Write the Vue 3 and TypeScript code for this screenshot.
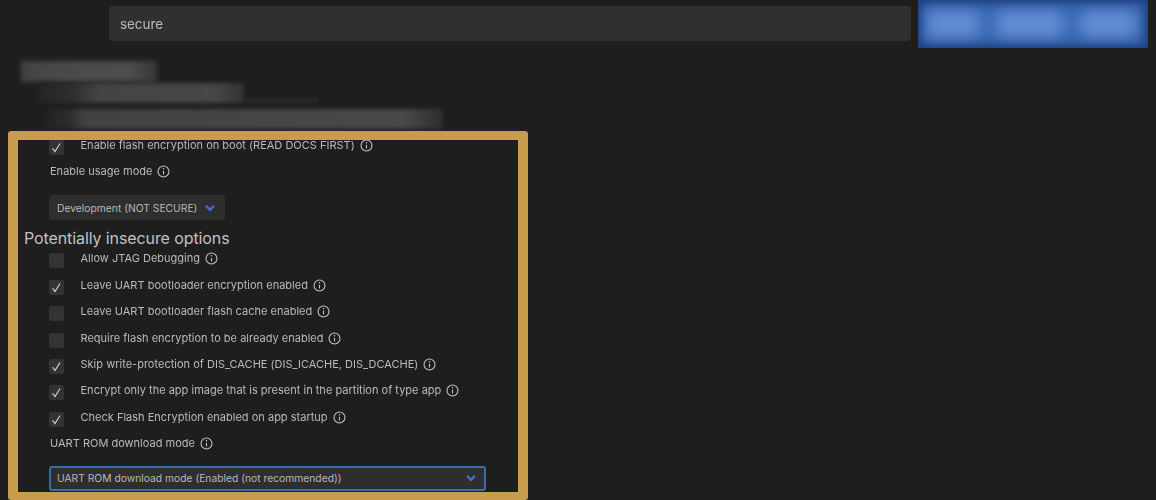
<script setup lang="ts">
interface Opt { label: string; checked: boolean }
const first: Opt = { label: 'Enable flash encryption on boot (READ DOCS FIRST)', checked: true }
const options: Opt[] = [
  { label: 'Allow JTAG Debugging', checked: false },
  { label: 'Leave UART bootloader encryption enabled', checked: true },
  { label: 'Leave UART bootloader flash cache enabled', checked: false },
  { label: 'Require flash encryption to be already enabled', checked: false },
  { label: 'Skip write-protection of DIS_CACHE (DIS_ICACHE, DIS_DCACHE)', checked: true },
  { label: 'Encrypt only the app image that is present in the partition of type app', checked: true },
  { label: 'Check Flash Encryption enabled on app startup', checked: true },
]
</script>

<template>
  <div class="page">
    <header class="topbar">
      <input class="search" value="secure" readonly />
      <div class="actions">
        <span class="glow g1"></span>
        <span class="glow g2"></span>
        <span class="glow g3"></span>
      </div>
    </header>

    <div class="redacted">
      <span class="smear s1"></span>
      <span class="smear s2"></span>
      <span class="smear s2b"></span>
      <span class="smear s3"></span>
    </div>

    <section class="frame">
      <div class="row">
        <span class="check"><svg v-if="first.checked" viewBox="0 0 16 16"><path d="M3.8 8.8 L6.4 12.4 L11.8 3.8" /></svg></span>
        <span class="label">{{ first.label }}</span>
        <svg class="info" viewBox="0 0 14 14"><circle cx="7" cy="7" r="5.9" /><path d="M7 6.2V10.2" /><circle class="dot" cx="7" cy="4.1" r=".8" /></svg>
      </div>
      <div class="field-label">
        <span class="label">Enable usage mode</span>
        <svg class="info" viewBox="0 0 14 14"><circle cx="7" cy="7" r="5.9" /><path d="M7 6.2V10.2" /><circle class="dot" cx="7" cy="4.1" r=".8" /></svg>
      </div>
      <div class="select small">
        <span>Development (NOT SECURE)</span>
        <svg class="chev" viewBox="0 0 12 8"><path d="M2 1.8 L6 5.8 L10 1.8" /></svg>
      </div>

      <h2 class="heading">Potentially insecure options</h2>

      <div v-for="o in options" :key="o.label" class="row">
        <span class="check"><svg v-if="o.checked" viewBox="0 0 16 16"><path d="M3.8 8.8 L6.4 12.4 L11.8 3.8" /></svg></span>
        <span class="label">{{ o.label }}</span>
        <svg class="info" viewBox="0 0 14 14"><circle cx="7" cy="7" r="5.9" /><path d="M7 6.2V10.2" /><circle class="dot" cx="7" cy="4.1" r=".8" /></svg>
      </div>

      <div class="field-label last">
        <span class="label">UART ROM download mode</span>
        <svg class="info" viewBox="0 0 14 14"><circle cx="7" cy="7" r="5.9" /><path d="M7 6.2V10.2" /><circle class="dot" cx="7" cy="4.1" r=".8" /></svg>
      </div>
      <div class="select wide">
        <span>UART ROM download mode (Enabled (not recommended))</span>
        <svg class="chev" viewBox="0 0 12 8"><path d="M2 1.8 L6 5.8 L10 1.8" /></svg>
      </div>
    </section>
  </div>
</template>

<style>
html, body { margin: 0; background: #1e1e1e; }
</style>

<style scoped>
.page {
  width: 1156px;
  height: 500px;
  overflow: hidden;
  background: #1e1e1e;
  font-family: Inter, "Liberation Sans", sans-serif;
  color: #bababa;
  display: flex;
  flex-direction: column;
}
.topbar {
  display: flex;
  height: 48px;
  padding-left: 109px;
  gap: 7px;
  flex: none;
}
.search {
  box-sizing: border-box;
  width: 802px;
  height: 35px;
  margin-top: 6px;
  padding: 0 11px;
  border: 0;
  border-radius: 4px;
  outline: 0;
  background: #303030;
  color: #bcbcbc;
  font: 13.4px Inter, "Liberation Sans", sans-serif;
  filter: blur(0.35px);
}
.actions {
  width: 230px;
  height: 48px;
  position: relative;
  overflow: hidden;
  background: #2c5aa6;
}
.actions::after {
  content: "";
  position: absolute;
  inset: 0;
  box-shadow: inset 0 0 9px 2px #1c3a78;
}
.glow {
  position: absolute;
  top: 9px;
  height: 30px;
  background: #6490d6;
  filter: blur(9px);
}
.g1 { left: 6px; width: 58px; }
.g2 { left: 76px; width: 72px; }
.g3 { left: 160px; width: 60px; }
.redacted {
  height: 83px;
  flex: none;
  position: relative;
}
.smear {
  position: absolute;
  filter: blur(1.5px);
}
.s1 {
  left: 21px;
  top: 13px;
  width: 136px;
  height: 21px;
  background: linear-gradient(90deg, #424242, #4a4a4a 30%, #4c4c4c 80%, #383838);
  filter: blur(2.5px);
}
.s2 {
  left: 38px;
  top: 35px;
  width: 206px;
  height: 20px;
  background: linear-gradient(90deg, #232323, #2e2e2e 16%, #444444 30%, #474747 85%, #333333);
  filter: blur(2px);
}
.s2b { left: 245px; top: 50px; width: 73px; height: 5px; background: #292929; }
.s3 {
  left: 45px;
  top: 61px;
  width: 398px;
  height: 20px;
  background: linear-gradient(90deg, #222222, #2c2c2c 6%, #424242 10%, #494949 90%, #2e2e2e);
  filter: blur(2px);
}
.frame {
  box-sizing: border-box;
  width: 520px;
  height: 369px;
  margin-left: 8px;
  padding: 0 0 0 31px;
  border: solid #c79c4c;
  border-width: 9px 10px 8px;
  border-radius: 3px;
  background: #1e1e1e;
  overflow: hidden;
  flex: none;
  position: relative;
}
.row {
  display: flex;
  align-items: flex-start;
  height: 16.4px;
  margin-bottom: 10px;
}
.row:first-child { margin-top: -1px; }
.check {
  width: 15px;
  height: 15px;
  margin-top: 1px;
  margin-right: 16.5px;
  border-radius: 2px;
  background: #333333;
  flex: none;
}
.check svg { display: block; width: 15px; height: 15px; fill: none; stroke: #dedede; stroke-width: 1.1; }
.label {
  font-size: 11px;
  line-height: 12px;
  letter-spacing: 0.01px;
  white-space: nowrap;
  filter: blur(0.25px);
}
.info {
  width: 13px;
  height: 13px;
  margin-left: 5px;
  flex: none;
  fill: none;
  stroke: #c4c4c4;
  stroke-width: 1.15;
}
.info .dot { fill: #c4c4c4; stroke: none; }
.field-label {
  display: flex;
  align-items: flex-start;
  padding-left: 1px;
  height: 12px;
  margin-bottom: 18px;
}
.field-label.last { margin-bottom: 16.5px; }
.select {
  box-sizing: border-box;
  height: 25px;
  display: flex;
  align-items: center;
  justify-content: space-between;
  border-radius: 3px;
  background: #2e2e2e;
  font-size: 10.3px;
  color: #b8b8b8;
  padding: 0 9px 0 8px;
}
.small { width: 176px; }
.wide {
  width: 437px;
  border: 2px solid #3a6bae;
  padding: 0 7px 0 6px;
}
.chev { width: 12px; height: 8px; fill: none; stroke: #4f6bd0; stroke-width: 2.3; flex: none; }
.heading {
  margin: 8px 0 4px -25px;
  font-size: 16px;
  letter-spacing: -0.1px;
  line-height: 20px;
  font-weight: 400;
  color: #c2c2c2;
  white-space: nowrap;
}
</style>
